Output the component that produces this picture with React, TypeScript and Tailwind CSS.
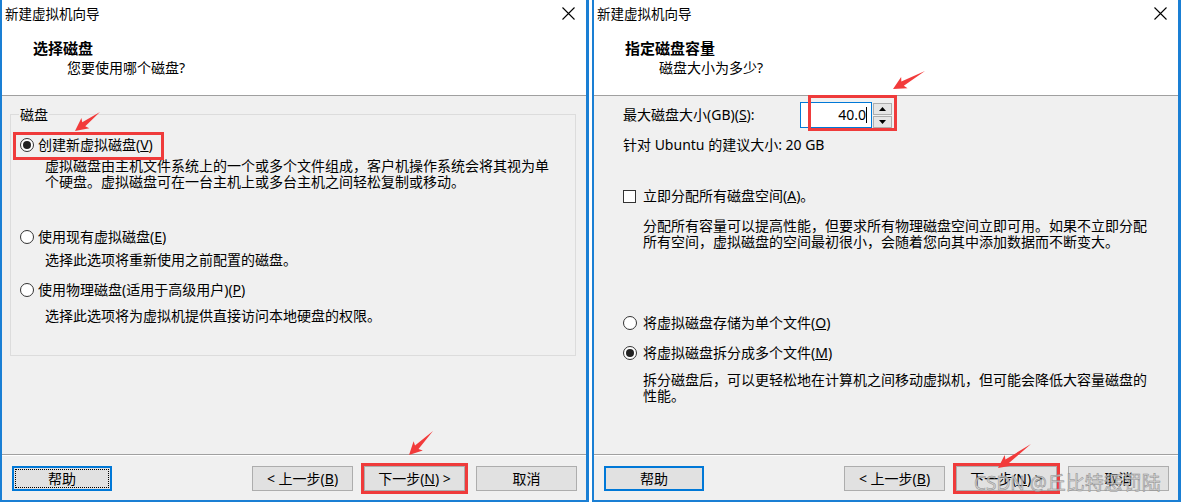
import React from 'react';

const font = "font-['Noto_Sans','Noto_Sans_CJK_SC',sans-serif]";

const Radio = ({ checked }: { checked?: boolean }) => (
  <span className="w-[14px] h-[14px] rounded-full border border-[#333] bg-white flex items-center justify-center shrink-0">
    {checked && <span className="w-[8px] h-[8px] rounded-full bg-[#222]" />}
  </span>
);

const Btn = ({ children, help, focus }: { children: React.ReactNode; help?: boolean; focus?: boolean }) => (
  <div
    className={
      help
        ? 'h-[25px] w-[100px] border-2 border-[#0078d7] bg-[#e1e1e1] flex items-center justify-center p-[1px]'
        : 'h-[25px] w-[101px] border border-[#adadad] bg-[#e1e1e1] flex items-center justify-center'
    }
  >
    <div
      className={
        focus
          ? 'w-full h-full border border-dotted border-black flex items-center justify-center text-[14px]'
          : 'w-full h-full flex items-center justify-center text-[14px]'
      }
    >
      {children}
    </div>
  </div>
);

const Footer = ({ focus }: { focus?: boolean }) => (
  <div className="h-[46px] border-t border-[#a0a0a0] bg-[#f0f0f0]">
    <div className="h-px bg-white" />
    <div className="flex items-center mt-[10px] pl-[10px] pr-[9px]">
      <Btn help focus={focus}>帮助</Btn>
      <div className="flex-1" />
      <Btn>&lt; 上一步(<u>B</u>)</Btn>
      <div className="relative ml-[11px]">
        <Btn>下一步(<u>N</u>) &gt;</Btn>
        <div className="absolute -inset-[3px] border-[3px] border-[#ef3b3b]" />
      </div>
      <div className="ml-[11px]">
        <Btn>取消</Btn>
      </div>
    </div>
  </div>
);

const Header = ({ title, sub }: { title: string; sub: string }) => (
  <div className="h-[96px] bg-white border-b border-[#a0a0a0] shrink-0">
    <div className="h-[27px] flex items-center justify-between pl-[3px] pr-[11px]">
      <span className="text-[13.5px] leading-4">新建虚拟机向导</span>
      <svg width="13" height="13" viewBox="0 0 13 13">
        <path d="M0.5 0.5 L12.5 12.5 M12.5 0.5 L0.5 12.5" stroke="#000" strokeWidth="1.1" />
      </svg>
    </div>
    <div className="mt-[11px] pl-[31px] text-[15px] font-bold leading-5">{title}</div>
    <div className="mt-[2px] pl-[65px] text-[14px] leading-4">{sub}</div>
  </div>
);

const LeftDialog = () => (
  <div className="w-[589px] h-[502px] shrink-0 border-l-2 border-r-[3px] border-b-2 border-[#1a7fd4] flex flex-col bg-[#f0f0f0]">
    <Header title="选择磁盘" sub="您要使用哪个磁盘?" />
    <div className="h-[358px] pt-[18px]">
      <div className="relative ml-[8px] w-[566px] h-[242px] border border-[#dcdcdc] pt-[22px] text-[14px] leading-4">
        <span className="absolute left-[8px] -top-[8px] bg-[#f0f0f0] px-[1px]">磁盘</span>
        <div className="relative flex items-center pl-[9px] gap-[4px] h-4">
          <Radio checked />
          <span>创建新虚拟磁盘(<u>V</u>)</span>
          <div className="absolute left-[2px] top-[-5px] w-[151px] h-[28px] border-[3px] border-[#ef3b3b]" />
        </div>
        <div className="mt-[5px] pl-[34px]">
          虚拟磁盘由主机文件系统上的一个或多个文件组成，客户机操作系统会将其视为单
          <br />
          个硬盘。虚拟磁盘可在一台主机上或多台主机之间轻松复制或移动。
        </div>
        <div className="mt-[39px] flex items-center pl-[9px] gap-[4px] h-4">
          <Radio />
          <span>使用现有虚拟磁盘(<u>E</u>)</span>
        </div>
        <div className="mt-[7px] pl-[34px]">选择此选项将重新使用之前配置的磁盘。</div>
        <div className="mt-[14px] flex items-center pl-[9px] gap-[4px] h-4">
          <Radio />
          <span>使用物理磁盘(适用于高级用户)(<u>P</u>)</span>
        </div>
        <div className="mt-[10px] pl-[34px]">选择此选项将为虚拟机提供直接访问本地硬盘的权限。</div>
      </div>
    </div>
    <Footer focus />
  </div>
);

const RightDialog = () => (
  <div className="w-[589px] h-[502px] shrink-0 border-l-2 border-r-[3px] border-b-2 border-[#1a7fd4] flex flex-col bg-[#f0f0f0]">
    <Header title="指定磁盘容量" sub="磁盘大小为多少?" />
    <div className="h-[358px] pt-[6px] pl-[29px] text-[14px] leading-4">
      <div className="flex items-center h-[26px]">
        <span className="w-[177px]">最大磁盘大小(GB)(<u>S</u>):</span>
        <div className="relative flex items-center">
          <div className="w-[72px] h-[26px] border border-[#0078d7] bg-white flex items-center justify-end pr-[4px]">
            <span>40.0</span>
            <span className="w-px h-[16px] bg-black" />
          </div>
          <div className="ml-px flex flex-col gap-px">
            <div className="w-[19px] h-[12px] border border-[#adadad] bg-[#e5e5e5] flex items-center justify-center">
              <svg width="7" height="4" viewBox="0 0 7 4"><path d="M0 4 L3.5 0 L7 4 Z" fill="#000" /></svg>
            </div>
            <div className="w-[19px] h-[12px] border border-[#adadad] bg-[#e5e5e5] flex items-center justify-center">
              <svg width="7" height="4" viewBox="0 0 7 4"><path d="M0 0 L3.5 4 L7 0 Z" fill="#000" /></svg>
            </div>
          </div>
          <div className="absolute left-[8px] -top-[7px] w-[89px] h-[36px] border-[3px] border-[#ef3b3b]" />
        </div>
      </div>
      <div className="mt-[9px]">针对 Ubuntu 的建议大小: 20 GB</div>
      <div className="mt-[35px] flex items-center gap-[7px] h-4">
        <span className="w-[13px] h-[13px] border border-[#333] bg-white shrink-0" />
        <span>立即分配所有磁盘空间(<u>A</u>)。</span>
      </div>
      <div className="mt-[14px] pl-[20px]">
        分配所有容量可以提高性能，但要求所有物理磁盘空间立即可用。如果不立即分配
        <br />
        所有空间，虚拟磁盘的空间最初很小，会随着您向其中添加数据而不断变大。
      </div>
      <div className="mt-[65px] flex items-center gap-[6px] h-4">
        <Radio />
        <span>将虚拟磁盘存储为单个文件(<u>O</u>)</span>
      </div>
      <div className="mt-[14px] flex items-center gap-[6px] h-4">
        <Radio checked />
        <span>将虚拟磁盘拆分成多个文件(<u>M</u>)</span>
      </div>
      <div className="mt-[11px] pl-[20px]">
        拆分磁盘后，可以更轻松地在计算机之间移动虚拟机，但可能会降低大容量磁盘的
        <br />
        性能。
      </div>
    </div>
    <Footer />
  </div>
);

// annotation arrows: tail -> tip, in page coordinates
const arrows = [
  [100, 112, 75, 131],
  [433, 431, 409, 455],
  [925, 71, 893, 89],
  [1031, 444, 998, 468],
];

const arrowPoints = ([tx, ty, px, py]: number[]) => {
  const len = Math.hypot(px - tx, py - ty);
  const ux = (px - tx) / len;
  const uy = (py - ty) / len;
  const nx = -uy;
  const ny = ux;
  const hl = 11;
  const pts = [
    [tx, ty],
    [px - ux * hl + nx * 2.5, py - uy * hl + ny * 2.5],
    [px - ux * (hl + 2) + nx * 6.5, py - uy * (hl + 2) + ny * 6.5],
    [px, py],
    [px - ux * (hl + 2) - nx * 6.5, py - uy * (hl + 2) - ny * 6.5],
    [px - ux * hl - nx * 2.5, py - uy * hl - ny * 2.5],
  ];
  return pts.map((p) => p.join(',')).join(' ');
};

export default function App() {
  return (
    <div className={`relative w-[1182px] h-[502px] overflow-hidden bg-white flex text-black ${font}`}>
      <LeftDialog />
      <div className="w-[3px] shrink-0 bg-white" />
      <RightDialog />
      <svg className="absolute inset-0 pointer-events-none" width="1182" height="502">
        {arrows.map((a, i) => (
          <polygon key={i} points={arrowPoints(a)} fill="#f23b3b" />
        ))}
      </svg>
      {/* CSDN watermark */}
      <div className="absolute left-[974px] top-[471px] text-[19px] leading-[24px] text-[#d2d2d2]/80 [-webkit-text-stroke:0.5px_#8c8c8c] pointer-events-none whitespace-nowrap">
        CSDN @丘比特惩罚陆
      </div>
    </div>
  );
}
